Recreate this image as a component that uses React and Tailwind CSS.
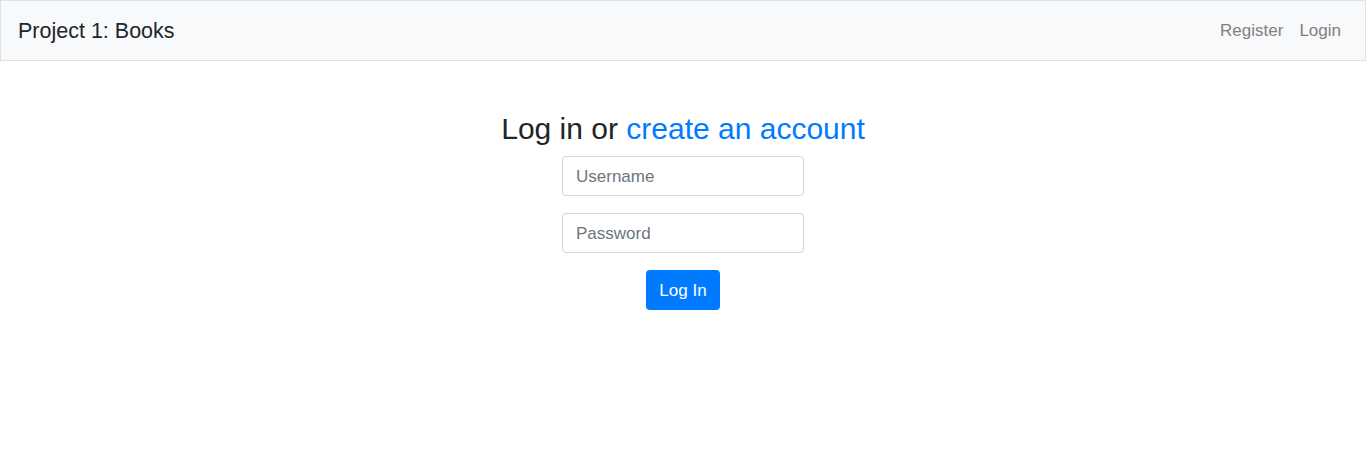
export default function App() {
  return (
    <div className="min-h-[468px] bg-white text-[#212529]" style={{ fontFamily: '"Liberation Sans", Arial, sans-serif' }}>
      {/* Navbar */}
      <nav className="flex h-[61px] items-center justify-between border border-[#dee2e6] bg-[#f8f9fa] pl-[17px] pr-4">
        <a href="#" className="text-[21.5px] leading-[30px] text-[#212529]">Project 1: Books</a>
        <div className="flex items-center">
          <a href="#" className="px-2 text-[17px] leading-6 text-[#808080]">Register</a>
          <a href="#" className="px-2 text-[17px] leading-6 text-[#808080]">Login</a>
        </div>
      </nav>

      {/* Login form */}
      <div className="flex flex-col items-center">
        <h3 className="mt-[51px] text-[30px] leading-[34px]">
          Log in or <a href="#" className="text-[#007bff]">create an account</a>
        </h3>
        <form className="mt-[10px] flex flex-col items-center">
          <input
            type="text"
            placeholder="Username"
            className="h-[40px] w-[242px] rounded border border-[#ced4da] pl-[13px] pr-3 pt-[2px] text-[17px] text-[#495057] placeholder:text-[#6c757d] outline-none"
          />
          <input
            type="password"
            placeholder="Password"
            className="mt-[17px] h-[40px] w-[242px] rounded border border-[#ced4da] pl-[13px] pr-3 pt-[2px] text-[17px] text-[#495057] placeholder:text-[#6c757d] outline-none"
          />
          <button type="button" className="mt-[17px] h-[40px] w-[74px] rounded bg-[#007bff] pt-[2px] text-[17px] text-white">
            Log In
          </button>
        </form>
      </div>
    </div>
  );
}
